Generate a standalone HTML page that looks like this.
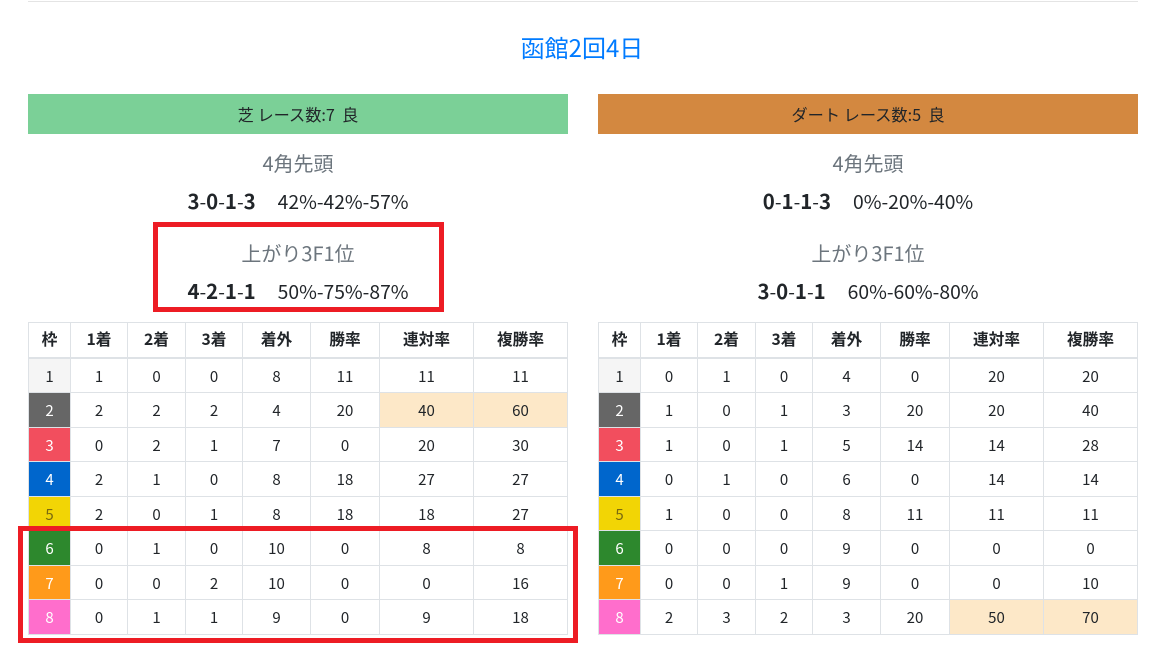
<!DOCTYPE html>
<html lang="ja"><head><meta charset="utf-8"><title>函館2回4日</title>
<style>
html,body{margin:0;padding:0;background:#fff;}
body{width:1160px;height:659px;position:relative;overflow:hidden;font-family:"Noto Sans CJK JP","Liberation Sans",sans-serif;color:#212529;}
.abs{position:absolute;text-align:center;white-space:nowrap;}
.hr{position:absolute;left:28px;top:1px;width:1110px;height:1px;background:#e4e4e4;}
.title{left:27px;width:1110px;top:30px;font-size:24px;line-height:34px;color:#007bff;}
.bar{top:94px;width:540px;height:40px;line-height:41px;font-size:16.2px;color:#212529;}
.h{width:540px;font-size:20px;line-height:28px;color:#6c757d;}
.s{width:540px;font-size:19.3px;line-height:28px;color:#212529;}
.s b{font-size:20.4px;}
.s i{display:inline-block;width:22px;}
table{position:absolute;top:322px;border-collapse:collapse;table-layout:fixed;font-size:15px;text-align:center;}
th,td{border:1px solid #dee2e6;padding:0;}
th{height:31.5px;padding-bottom:2px;border-bottom:2px solid #dee2e6;font-weight:700;font-size:15.7px;}
td{height:31.5px;padding-top:2px;}
.o{background:#fde8c8;}
.c1{background:#f5f5f5;}.c2{background:#666;color:#fff;}.c3{background:#f24e5e;color:#fff;}.c4{background:#0066cc;color:#fff;}
.c5{background:#f2d505;color:#7a6a10;}.c6{background:#2d882d;color:#fff;}.c7{background:#ff9a1a;color:#fff;}.c8{background:#ff6ecc;color:#fff;}
.red{position:absolute;border:5px solid #ed1c24;box-sizing:border-box;}
</style></head><body>
<div class="hr"></div>
<div class="abs title">函館2回4日</div>

<div class="abs bar" style="left:28px;background:#7bd097;">芝 レース数:7&nbsp; 良</div>
<div class="abs bar" style="left:598px;background:#d38840;">ダート レース数:5&nbsp; 良</div>

<div class="abs h" style="left:28px;top:149px;">4角先頭</div>
<div class="abs s" style="left:28px;top:186px;"><b>3</b>-<b>0</b>-<b>1</b>-<b>3</b><i></i>42%-42%-57%</div>
<div class="abs h" style="left:28px;top:239px;">上がり3F1位</div>
<div class="abs s" style="left:28px;top:276px;"><b>4</b>-<b>2</b>-<b>1</b>-<b>1</b><i></i>50%-75%-87%</div>

<div class="abs h" style="left:598px;top:149px;">4角先頭</div>
<div class="abs s" style="left:598px;top:186px;"><b>0</b>-<b>1</b>-<b>1</b>-<b>3</b><i></i>0%-20%-40%</div>
<div class="abs h" style="left:598px;top:239px;">上がり3F1位</div>
<div class="abs s" style="left:598px;top:276px;"><b>3</b>-<b>0</b>-<b>1</b>-<b>1</b><i></i>60%-60%-80%</div>

<table style="left:28px;width:539px;">
<colgroup><col style="width:42px"><col style="width:57px"><col style="width:58px"><col style="width:57px"><col style="width:68px"><col style="width:69px"><col style="width:94px"><col style="width:94px"></colgroup>
<tr><th>枠</th><th>1着</th><th>2着</th><th>3着</th><th>着外</th><th>勝率</th><th>連対率</th><th>複勝率</th></tr>
<tr><td class="c1">1</td><td>1</td><td>0</td><td>0</td><td>8</td><td>11</td><td>11</td><td>11</td></tr>
<tr><td class="c2">2</td><td>2</td><td>2</td><td>2</td><td>4</td><td>20</td><td class="o">40</td><td class="o">60</td></tr>
<tr><td class="c3">3</td><td>0</td><td>2</td><td>1</td><td>7</td><td>0</td><td>20</td><td>30</td></tr>
<tr><td class="c4">4</td><td>2</td><td>1</td><td>0</td><td>8</td><td>18</td><td>27</td><td>27</td></tr>
<tr><td class="c5">5</td><td>2</td><td>0</td><td>1</td><td>8</td><td>18</td><td>18</td><td>27</td></tr>
<tr><td class="c6">6</td><td>0</td><td>1</td><td>0</td><td>10</td><td>0</td><td>8</td><td>8</td></tr>
<tr><td class="c7">7</td><td>0</td><td>0</td><td>2</td><td>10</td><td>0</td><td>0</td><td>16</td></tr>
<tr><td class="c8">8</td><td>0</td><td>1</td><td>1</td><td>9</td><td>0</td><td>9</td><td>18</td></tr>
</table>

<table style="left:598px;width:539px;">
<colgroup><col style="width:42px"><col style="width:57px"><col style="width:58px"><col style="width:57px"><col style="width:68px"><col style="width:69px"><col style="width:94px"><col style="width:94px"></colgroup>
<tr><th>枠</th><th>1着</th><th>2着</th><th>3着</th><th>着外</th><th>勝率</th><th>連対率</th><th>複勝率</th></tr>
<tr><td class="c1">1</td><td>0</td><td>1</td><td>0</td><td>4</td><td>0</td><td>20</td><td>20</td></tr>
<tr><td class="c2">2</td><td>1</td><td>0</td><td>1</td><td>3</td><td>20</td><td>20</td><td>40</td></tr>
<tr><td class="c3">3</td><td>1</td><td>0</td><td>1</td><td>5</td><td>14</td><td>14</td><td>28</td></tr>
<tr><td class="c4">4</td><td>0</td><td>1</td><td>0</td><td>6</td><td>0</td><td>14</td><td>14</td></tr>
<tr><td class="c5">5</td><td>1</td><td>0</td><td>0</td><td>8</td><td>11</td><td>11</td><td>11</td></tr>
<tr><td class="c6">6</td><td>0</td><td>0</td><td>0</td><td>9</td><td>0</td><td>0</td><td>0</td></tr>
<tr><td class="c7">7</td><td>0</td><td>0</td><td>1</td><td>9</td><td>0</td><td>0</td><td>10</td></tr>
<tr><td class="c8">8</td><td>2</td><td>3</td><td>2</td><td>3</td><td>20</td><td class="o">50</td><td class="o">70</td></tr>
</table>

<div class="red" style="left:153px;top:222px;width:291px;height:90px;"></div>
<div class="red" style="left:18px;top:526px;width:560px;height:117px;"></div>
</body></html>
